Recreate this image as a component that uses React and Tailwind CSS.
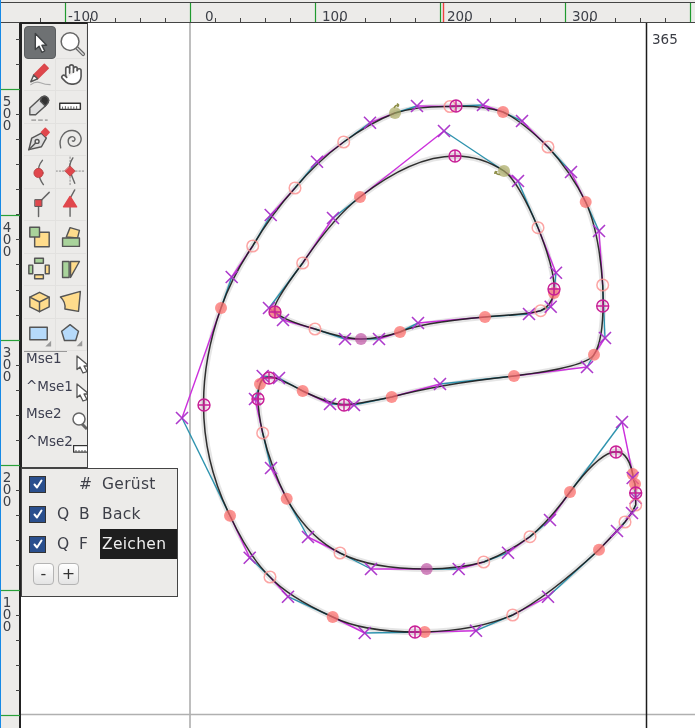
import React from "react";
import { Hand } from "lucide-react";

const OUTER = [[503,112,"f"],[522,121,"x"],[548,147,"h"],[571,172,"x"],[585.7,202,"f"],[599,231,"x"],[602.7,285,"h"],[605,338,"x"],[594,354.7,"f"],[587,367,"x"],[514,376,"f"],[440,384,"x"],[391.7,397,"f"],[354,405,"x"],[330,404,"x"],[302.7,391,"f"],[279,378,"x"],[262.7,376,"x"],[260,384,"f"],[255,399,"x"],[262.7,433,"h"],[271,468,"x"],[286.7,498.7,"f"],[308,537,"x"],[340,553,"h"],[371,569,"x"],[426.7,569,"m"],[458.7,569,"x"],[483.7,562,"h"],[508,552.7,"x"],[530,536.7,"h"],[550,520,"x"],[570,492,"f"],[622,422,"x"],[632.7,474,"f"],[632.7,478,"x"],[635,484,"f"],[635.7,498,"x"],[635.7,505,"h"],[632,513,"x"],[625,522,"h"],[617,531,"x"],[599,549.7,"f"],[548,596.7,"x"],[512.7,615,"h"],[476,630.7,"x"],[424.7,632,"f"],[364.7,633,"x"],[332.7,617,"f"],[288,596.7,"x"],[270,577,"h"],[249.7,557.7,"x"],[230,515.7,"f"],[182,418,"x"],[221,308,"f"],[231.7,277,"x"],[252.7,246,"h"],[270.7,215,"x"],[295,188,"h"],[317,161.7,"x"],[343.7,142,"h"],[370,122.7,"x"],[395,113,"o"],[417,106,"x"],[450,106.5,"h"],[483,105,"x"]];
const INNER = [[504,171,"o"],[444,131,"x"],[360,197,"f"],[333,218,"x"],[302.7,263,"h"],[269,308,"x"],[275,312,"f"],[283,320,"x"],[315,329,"h"],[345,339,"x"],[361,339,"m"],[379,339,"x"],[400,332,"f"],[418,323,"x"],[485,317,"f"],[529,314,"x"],[540.7,310.7,"h"],[550.7,306.7,"x"],[554,293,"f"],[556,272.7,"x"],[538,227.7,"h"],[518,181,"x"]];
const EXTREMA = [[456,106],[602.7,306],[344,405],[269,378],[258,399],[616,452],[635.7,493],[415,632],[204,405],[455,156],[554,289],[275,312]];

function contourPath(pts) {
  const n = pts.length;
  let d = `M${pts[0][0]} ${pts[0][1]}`;
  for (let i = 0; i < n; i++) {
    const c = pts[i];
    const nx = pts[(i + 1) % n];
    if (c[2] !== "x") {
      if (nx[2] !== "x") d += `L${nx[0]} ${nx[1]}`;
      continue;
    }
    const end = nx[2] === "x" ? [(c[0] + nx[0]) / 2, (c[1] + nx[1]) / 2] : nx;
    d += `Q${c[0]} ${c[1]} ${end[0]} ${end[1]}`;
  }
  return d + "Z";
}

function handles(pts) {
  const n = pts.length;
  const res = [];
  pts.forEach((c, i) => {
    if (c[2] !== "x") return;
    const p = pts[(i - 1 + n) % n];
    const q = pts[(i + 1) % n];
    const a = p[2] === "x" ? [(c[0] + p[0]) / 2, (c[1] + p[1]) / 2] : p;
    const b = q[2] === "x" ? [(c[0] + q[0]) / 2, (c[1] + q[1]) / 2] : q;
    res.push({ a, c, b });
  });
  return res;
}

function Mark({ p }) {
  const [x, y, t] = p;
  if (t === "x") {
    return <path d={`M${x - 6} ${y - 6}L${x + 6} ${y + 6}M${x - 6} ${y + 6}L${x + 6} ${y - 6}`} stroke="#a92fc9" strokeOpacity="0.95" strokeWidth="1.6" fill="none" />;
  }
  if (t === "f") return <circle cx={x} cy={y} r="6" fill="#fb6f6c" fillOpacity="0.75" />;
  if (t === "h") return <circle cx={x} cy={y} r="5.8" fill="none" stroke="#fb8f8d" strokeOpacity="0.8" strokeWidth="1.5" />;
  if (t === "m") return <circle cx={x} cy={y} r="6" fill="#b9459b" fillOpacity="0.65" />;
  return (
    <g>
      <circle cx={x} cy={y} r="6" fill="#a8a860" fillOpacity="0.7" />
      <path d={`M${x - 1} ${y - 5}q1 -3 5 -3m0 0l-2 -1.5m2 1.5l-1.5 2`} transform={y > 150 ? `rotate(-120 ${x} ${y})` : undefined} stroke="#8f8f4a" strokeWidth="1.4" fill="none" />
    </g>
  );
}

function Glyph() {
  const outerD = contourPath(OUTER);
  const innerD = contourPath(INNER);
  const hs = [...handles(OUTER), ...handles(INNER)];
  return (
    <svg className="absolute left-0 top-0" width="674" height="705" viewBox="21 23 674 705">
      <path d="M190 23V728" stroke="#a8a8a8" strokeWidth="1.5" />
      <path d="M21 714.5H695" stroke="#b0b0b0" strokeWidth="1.5" />
      <path d="M646.5 23V728" stroke="#1c1c1c" strokeWidth="1.5" />
      <path d={outerD + innerD} fill="none" stroke="#000" strokeOpacity="0.1" strokeWidth="6" />
      {hs.map((h, i) => (
        <g key={i} fill="none" strokeWidth="1.4">
          <path d={`M${h.a[0]} ${h.a[1]}L${h.c[0]} ${h.c[1]}`} stroke="#2e93ae" />
          <path d={`M${h.c[0]} ${h.c[1]}L${h.b[0]} ${h.b[1]}`} stroke="#cc2fdc" />
        </g>
      ))}
      <path d={outerD + innerD} fill="none" stroke="#1a1a1a" strokeOpacity="0.9" strokeWidth="1.5" />
      {[...OUTER, ...INNER].map((p, i) => <Mark key={i} p={p} />)}
      {EXTREMA.map(([x, y], i) => (
        <g key={i} fill="none" stroke="#c81f96" strokeWidth="1.4">
          <circle cx={x} cy={y} r="6" fill="#d070b0" fillOpacity="0.15" />
          <path d={`M${x - 6} ${y}H${x + 6}M${x} ${y - 6}V${y + 6}`} />
        </g>
      ))}
    </svg>
  );
}

const TXT = "#3d4048";

function TopRuler() {
  const minors = [];
  for (let x = 40; x < 695; x += 25) minors.push(x);
  const majors = [65, 190, 315, 440, 565, 690];
  const labels = [["-100", 68], ["0", 205], ["100", 322], ["200", 447], ["300", 572]];
  return (
    <div className="h-[23px] shrink-0 bg-[#ecebe9] pt-[2px]">
      <div className="relative h-[21px] border-y border-[#444]">
        <svg className="absolute left-0 top-0" width="694" height="19" viewBox="1 3 694 19">
          {minors.map((x) => <path key={x} d={`M${x + 0.5} 18V22`} stroke="#444" strokeWidth="1" />)}
          {majors.map((x) => <path key={x} d={`M${x + 0.5} 3V22`} stroke="#1f9a2e" strokeWidth="1.2" />)}
          <path d="M443.5 3V22" stroke="#f04040" strokeWidth="1.4" />
          {labels.map(([t, x]) => (
            <text key={t} x={x} y="20.5" fill={TXT} className="font-['DejaVu_Sans'] text-[13.5px]">{t}</text>
          ))}
        </svg>
      </div>
    </div>
  );
}

function LeftRuler() {
  const minors = [];
  for (let y = 39; y < 728; y += 25.05) minors.push(Math.round(y));
  const majors = [89, 215, 340, 465, 590, 715];
  const labels = [["500", 66], ["400", 192], ["300", 317], ["200", 442], ["100", 567]];
  return (
    <div className="relative w-[20px] shrink-0 border-r-2 border-[#222] bg-[#ecebe9]">
      <svg className="absolute left-0 top-0" width="19" height="705" viewBox="1 23 19 705">
        {minors.map((y) => <path key={y} d={`M16 ${y + 0.5}H20`} stroke="#444" strokeWidth="1" />)}
        {majors.map((y) => <path key={y} d={`M1 ${y + 0.5}H20`} stroke="#2aa03a" strokeWidth="1.2" />)}
      </svg>
      {labels.map(([t, y]) => (
        <span key={t} style={{ top: y + 4 }} className="absolute left-[-3px] w-[17px] font-['DejaVu_Sans'] text-[13.5px] leading-[17px] tracking-[-4.2px] text-[#3d4048] [text-orientation:upright] [writing-mode:vertical-rl]">{t}</span>
      ))}
    </div>
  );
}

const S = "#555555";
const RED = "#e0474c";
const GRN = "#a9d39b";
const YEL = "#ffdc8c";
const BLU = "#b6dafa";

function Ico({ children }) {
  return <svg width="32" height="32" viewBox="0 0 32 32" fill="none" stroke={S} strokeWidth="1.5" strokeLinejoin="round" strokeLinecap="round">{children}</svg>;
}

const corner = <path d="M28 23V29H22Z" fill="#9a9a9a" stroke="none" />;

const ICONS = [
  <Ico><path d="M11 7V24L15 20.5L18 27L21 25.5L18 19.5H23Z" fill="#fff" stroke="#3f4244" /></Ico>,
  <Ico><path d="M22 22L29 29" stroke="#666" strokeWidth="4" /><path d="M22 22L29 29" stroke="#ddd" strokeWidth="1.5" /><circle cx="15" cy="15.5" r="9.5" fill="#fff" stroke="#666" strokeWidth="1.6" /></Ico>,
  <Ico><path d="M10 17L21 6L25 10L14 21Z" fill={RED} stroke="#d8484c" /><path d="M10 17L7 24L14 21Z" fill="#f2f2f2" /><path d="M7 27Q12 23 17 25T27 27" stroke="#aaa" strokeWidth="1.2" /></Ico>,
  <span className="flex h-8 w-8 items-center justify-center text-[#555]"><Hand size={23} fill="#fff" strokeWidth={1.7} /></span>,
  <Ico><path d="M6 24V17L18 6Q24 3 25.5 9Q25.5 12 22 15L12 24Z" fill="#dedede" /><path d="M18 6Q24 3 25.5 9Q25.5 12 22 15L17 10Z" fill="#333" /><path d="M8 29.5H12M15 29.5H19M22 29.5H24" stroke="#777" strokeWidth="1" /></Ico>,
  <Ico><rect x="4" y="12" width="22" height="6.5" fill="#fff" stroke="#333" strokeWidth="1.5" /><path d="M7 18V16M10 18V15.5M13 18V16M16 18V15.5M19 18V16M22 18V15.5" stroke="#555" strokeWidth="1" /></Ico>,
  <Ico><path d="M5 27L8 15L18 10L23 15L18 24Z" fill="#dedede" /><path d="M5 27L12.5 19.5" /><circle cx="13.5" cy="18.5" r="2" fill="#eee" /><path d="M18 9L22 5L26 9L22.5 13Z" fill={RED} stroke={RED} /></Ico>,
  <Ico><path d="M5 25.5C2 14 10 6 18 7C26 8 29 16 25 21C21 26 13 24 13 18C13 14 18 12 20 15C21 17 19 19 17.5 18" strokeWidth="1.5" stroke="#666" /></Ico>,
  <Ico><path d="M19 4Q14 10 15 17T20 29" stroke="#666" /><circle cx="15" cy="17" r="4.8" fill={RED} stroke="#b04040" strokeWidth="0.8" /></Ico>,
  <Ico><path d="M0 15H30M15 0V31" stroke="#888" strokeWidth="1" strokeDasharray="1.5 2" /><path d="M18 1Q13 9 15 15T20 28" stroke="#666" /><path d="M15 9.5L20.5 15L15 20.5L9.5 15Z" fill={RED} stroke="#b04040" strokeWidth="0.8" /></Ico>,
  <Ico><path d="M15 15V29M15 15L26 4" stroke="#666" /><rect x="11.5" y="11.5" width="7" height="7" fill={RED} stroke="#555" strokeWidth="1" /></Ico>,
  <Ico><path d="M15 15V29M15 10L20 1" stroke="#666" /><path d="M15 8L22 19H8Z" fill={RED} stroke={RED} /></Ico>,
  <Ico><rect x="11" y="11" width="15" height="15" fill={YEL} /><rect x="6" y="6" width="10" height="10" fill={GRN} /></Ico>,
  <Ico><path d="M11 16L15 6L25 9L23 17Z" fill={YEL} /><rect x="7" y="17" width="18" height="9" fill={GRN} /></Ico>,
  <Ico><rect x="11" y="5" width="9" height="5" fill={GRN} /><rect x="5" y="12" width="4" height="9" fill={GRN} /><rect x="22" y="12" width="4" height="9" fill={YEL} /><rect x="11" y="22" width="9" height="4" fill={YEL} /></Ico>,
  <Ico><rect x="7" y="8" width="7" height="17" fill={GRN} /><path d="M15.5 8H25L15.5 25Z" fill={YEL} /></Ico>,
  <Ico><path d="M16 6L26 11V21L16 26L6 21V11Z" fill={YEL} /><path d="M6 11L16 16L26 11M16 16V26" /></Ico>,
  <Ico><path d="M4.7 10.7L26 4.7L24 26L9.5 23.5Q10.5 16 4.7 10.7Z" fill={YEL} /></Ico>,
  <Ico><rect x="6" y="9" width="18" height="13" fill={BLU} />{corner}</Ico>,
  <Ico><path d="M15 6L24 13L21 23H9L6 13Z" fill={BLU} />{corner}</Ico>,
];

const MiniArrow = () => (
  <svg width="11" height="19" viewBox="0 0 11 19" className="mt-[4px]" fill="#fff" stroke="#555" strokeWidth="1.3" strokeLinejoin="round">
    <path d="M1 1V14.5L4 12L7 18L11 16.5L8 11H13Z" />
  </svg>
);
const MiniMag = () => (
  <svg width="15" height="18" viewBox="0 0 15 18" className="mt-[6px]" fill="#fff" stroke="#666" strokeWidth="1.5">
    <path d="M10 12L15 17" strokeWidth="3" />
    <circle cx="7" cy="7" r="6" />
  </svg>
);
const MiniRuler = () => (
  <svg width="15" height="8" viewBox="0 0 15 8" className="mt-[11px]" fill="#fff" stroke="#333" strokeWidth="1.2">
    <rect x="0.6" y="0.6" width="18" height="6.5" />
    <path d="M3 7V5M6 7V5M9 7V5M12 7V5" strokeWidth="1" stroke="#555" />
  </svg>
);

const MOUSE = [
  ["Mse1", <MiniArrow />],
  ["^Mse1", <MiniArrow />],
  ["Mse2", <MiniMag />],
  ["^Mse2", <MiniRuler />],
];

function Toolbox() {
  return (
    <div className="absolute left-[20px] top-[22px] h-[446px] w-[68px] overflow-hidden border-b border-l-2 border-r border-t-2 border-b-[#444] border-l-[#222] border-r-[#444] border-t-[#222] bg-[#ecebe9] pl-[2px] pt-[2px] font-['DejaVu_Sans']">
      <div className="grid grid-cols-[32px_31px] auto-rows-[32.5px]">
        {ICONS.map((ic, i) => (
          <div key={i} className={i === 0 ? "flex items-center justify-center rounded-sm border border-[#5a5d5f] bg-[#6e7173]" : "flex items-center justify-center border-b border-r border-[#e2e1df]"}>
            {ic}
          </div>
        ))}
      </div>
      <div className="w-[43px] border-t border-[#999]" />
      <div className="-mt-px flex flex-col">
        {MOUSE.map(([t, ic]) => (
          <div key={t} className="flex h-[27.5px] justify-between overflow-hidden pl-[2px] text-[13.5px] leading-[14px] text-[#3d3f50]">
            <span className="whitespace-nowrap">{t}</span>
            <span className="shrink-0">{ic}</span>
          </div>
        ))}
      </div>
    </div>
  );
}

function Check() {
  return (
    <span className="flex h-[17px] w-[17px] shrink-0 items-center justify-center border border-[#333] bg-[#2a4f8e]">
      <svg width="12" height="12" viewBox="0 0 12 12" fill="none" stroke="#fff" strokeWidth="2" strokeLinecap="round" strokeLinejoin="round"><path d="M2.5 6.5L5 9.5L9.5 2.5" /></svg>
    </span>
  );
}

const LAYERS = [
  ["", "#", "Gerüst", false],
  ["Q", "B", "Back", false],
  ["Q", "F", "Zeichen", true],
];

function Layers() {
  return (
    <div className="absolute left-[21px] top-[468px] h-[129px] w-[157px] border border-[#444] bg-[#ecebe9] font-['DejaVu_Sans'] text-[15.5px] text-[#3d3f48]">
      <div className="flex flex-col">
        {LAYERS.map(([a, b, n, sel]) => (
          <div key={n} className="flex h-[30px] items-center pl-[7px]">
            <Check />
            <span className="ml-[11px] mt-[1px] w-[22px]">{a}</span>
            <span className="mt-[1px] w-[21px]">{b}</span>
            <span className={sel ? "flex h-full flex-1 items-center bg-[#1e1e1e] pl-[2px] pt-[2px] tracking-[0.3px] text-[#eeeeee]" : "flex h-full flex-1 items-center pl-[2px] pt-[2px] tracking-[0.3px]"}>{n}</span>
          </div>
        ))}
      </div>
      <div className="mt-[4px] flex gap-[4px] pl-[11px]">
        {["-", "+"].map((t) => (
          <button key={t} className="flex h-[22px] w-[21px] items-center justify-center rounded-[4px] border border-[#b4b4b4] bg-gradient-to-b from-[#ffffff] to-[#e4e4e4] text-[16px] leading-none text-[#333]">{t}</button>
        ))}
      </div>
    </div>
  );
}

export default function App() {
  return (
    <div className="relative flex h-[728px] w-[695px] overflow-hidden bg-white blur-[0.45px]">
      <div className="w-px shrink-0 bg-[#1689e6]" />
      <div className="flex min-w-0 flex-1 flex-col">
        <TopRuler />
        <div className="flex min-h-0 flex-1">
          <LeftRuler />
          <div className="relative flex-1 bg-white">
            <Glyph />
            <span className="absolute left-[631px] top-[8px] font-['DejaVu_Sans'] text-[13.5px] leading-4 text-[#3a3c44]">365</span>
          </div>
        </div>
      </div>
      <Toolbox />
      <Layers />
    </div>
  );
}
